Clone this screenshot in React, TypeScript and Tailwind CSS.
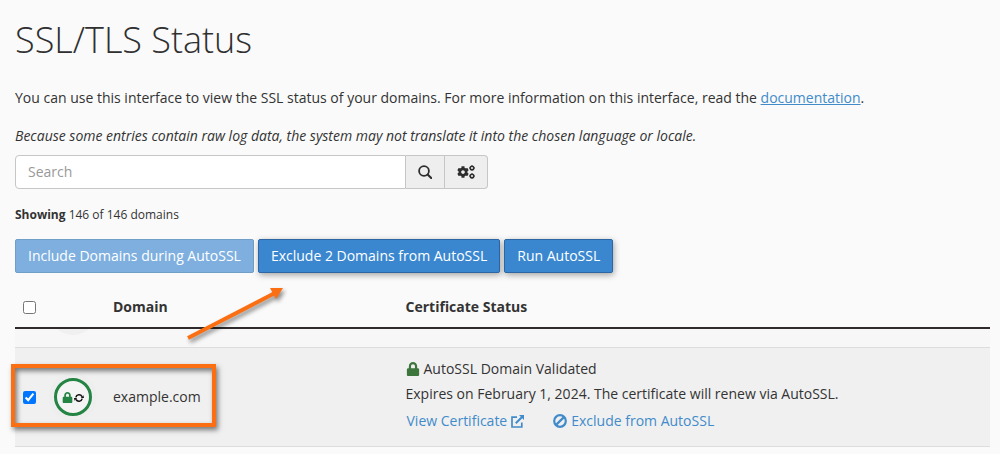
import React, { useState } from "react";
import { FaLock, FaCog } from "react-icons/fa";

const actionButton =
  "h-[34px] px-3 rounded-[2px] border border-[#2c67a3] bg-[#3a87d0] text-white whitespace-nowrap shadow-[1px_2px_6px_rgba(0,0,0,0.35)]";

function SearchIcon() {
  return (
    <svg width="14" height="14" viewBox="0 0 14 14" fill="none" stroke="#2d2d2d" strokeWidth="1.8" aria-hidden="true">
      <circle cx="6" cy="6" r="4.9" />
      <path d="M9.6 9.6 L13.2 13" strokeWidth="2.1" strokeLinecap="round" />
    </svg>
  );
}

function CogsIcon() {
  return (
    <span className="flex items-center">
      <FaCog size={12} />
      <svg width="6" height="14" viewBox="0 0 6 14" fill="none" stroke="#2d2d2d" strokeWidth="1.5" aria-hidden="true">
        <circle cx="3" cy="3" r="1.8" />
        <circle cx="3" cy="11" r="1.8" />
        <path d="M3 0v.8M3 5.2v.8M0 3h.8M5.2 3h.8M3 8v.8M3 13.2v.8M0 11h.8M5.2 11h.8" strokeWidth="1" />
      </svg>
    </span>
  );
}

function SyncIcon() {
  return (
    <svg width="10" height="10" viewBox="0 0 10 10" fill="none" stroke="#111111" strokeWidth="1.5" className="mt-0.5" aria-hidden="true">
      <path d="M1.8 4.3 A3.3 3.3 0 0 1 8 3.6" />
      <path d="M8.2 5.7 A3.3 3.3 0 0 1 2 6.4" />
      <path d="M6.8 4.9 H10 L9.4 2.2 Z" fill="#111111" stroke="none" />
      <path d="M3.2 5.1 H0 L.6 7.8 Z" fill="#111111" stroke="none" />
    </svg>
  );
}

function ExternalLinkIcon() {
  return (
    <svg width="13" height="13" viewBox="0 0 13 13" fill="none" stroke="currentColor" strokeWidth="1.7" aria-hidden="true">
      <path d="M6 2.2 H1 V12 H10.8 V7.5" />
      <path d="M4.8 8.2 L10.8 2.2" strokeWidth="2" />
      <path d="M8 0 H13 V5 Z" fill="currentColor" stroke="none" />
    </svg>
  );
}

function BanIcon() {
  return (
    <svg width="14" height="14" viewBox="0 0 14 14" fill="none" stroke="currentColor" strokeWidth="2.2" aria-hidden="true">
      <circle cx="7" cy="7" r="5.8" />
      <path d="M3.1 10.9 L10.9 3.1" />
    </svg>
  );
}

function StatusBadge() {
  return (
    <span className="flex size-12 items-center justify-center rounded-full bg-[#eeeeee]">
      <span className="flex size-[38px] items-center justify-center gap-px rounded-full border-[3px] border-[#238443] bg-[#f4f4f4]">
        <FaLock size={11} className="text-[#238443]" />
        <SyncIcon />
      </span>
    </span>
  );
}

// Pointer from the selected row up to the exclude button
function Arrow() {
  return (
    <svg
      className="pointer-events-none absolute left-[180px] top-[280px] overflow-visible drop-shadow-[2px_3px_2px_rgba(0,0,0,0.45)]"
      width="110"
      height="65"
      viewBox="0 0 110 65"
      aria-hidden="true"
    >
      <path d="M8 58 L95 13" stroke="#fb6f12" strokeWidth="4" />
      <path d="M103 8 L90 8 L96 19 Z" fill="#fb6f12" />
    </svg>
  );
}

export default function App() {
  const [search, setSearch] = useState("");
  const [allChecked, setAllChecked] = useState(false);
  const [checked, setChecked] = useState(true);

  return (
    <div className="relative min-h-screen bg-[#fafafa] pl-[15px] pr-2.5 pt-5 pb-[7px] font-['Open_Sans',sans-serif] text-sm/5 text-[#333333]">
      <h1 className="text-[36px]/[40px] font-light text-[#2f2f2f]">SSL/TLS Status</h1>
      <p className="mt-7">
        You can use this interface to view the SSL status of your domains. For more information on this interface, read the{" "}
        <a href="#" className="text-[#428bca] underline">documentation</a>.
      </p>
      <p className="mt-[18px] italic">
        Because some entries contain raw log data, the system may not translate it into the chosen language or locale.
      </p>

      <div className="mt-[9px] flex h-[34px] w-full max-w-[473px]">
        <input
          type="text"
          aria-label="Search"
          placeholder="Search"
          value={search}
          onChange={(e) => setSearch(e.target.value)}
          className="min-w-0 flex-1 rounded-l border border-[#c6c6c6] bg-white px-3 outline-none placeholder:text-[#999999]"
        />
        <button type="button" aria-label="Search domains" className="flex w-[39px] items-center justify-center border-y border-r border-[#c6c6c6] bg-[#eeeeee]">
          <SearchIcon />
        </button>
        <button type="button" aria-label="Search options" className="flex w-[43px] items-center justify-center rounded-r border-y border-r border-[#c6c6c6] bg-[#eeeeee] text-[#2d2d2d]">
          <CogsIcon />
        </button>
      </div>

      <p className="mt-4 text-xs/5"><strong className="font-bold">Showing</strong> 146 of 146 domains</p>

      <div className="mt-[14px] flex gap-1">
        <button type="button" disabled className="h-[34px] whitespace-nowrap rounded-[2px] border border-[#6f9fc9] bg-[#7eafdf] px-3 text-white">
          Include Domains during AutoSSL
        </button>
        <button type="button" className={actionButton}>Exclude 2 Domains from AutoSSL</button>
        <button type="button" className={actionButton}>Run AutoSSL</button>
      </div>

      <table className="mt-[14px] w-full table-fixed text-left">
        <colgroup>
          <col className="w-[34px]" />
          <col className="w-16" />
          <col className="w-[30%]" />
          <col />
        </colgroup>
        <thead>
          <tr className="h-[41px] border-b-2 border-[#2f2b2c]">
            <th className="pl-2">
              <input type="checkbox" aria-label="Select all domains" checked={allChecked} onChange={() => setAllChecked(!allChecked)} className="block size-[13px]" />
            </th>
            <th />
            <th className="font-bold">Domain</th>
            <th className="font-bold">Certificate Status</th>
          </tr>
        </thead>
        <tbody>
          <tr className="bg-[#f7f7f7]">
            <td />
            <td className="p-0">
              <div className="h-[18px]">
                <div className="flex h-1.5 items-end overflow-hidden">
                  <span className="block size-12 shrink-0 rounded-full bg-[#f0f0f0]" />
                </div>
              </div>
            </td>
            <td />
            <td />
          </tr>
          <tr className="border-y border-[#dddddd] bg-[#f0f0f0]">
            <td className="relative pl-2">
              <input type="checkbox" aria-label="Select example.com" checked={checked} onChange={() => setChecked(!checked)} className="block size-[13px] accent-[#0075ff]" />
              <div className="pointer-events-none absolute -left-1 top-4 h-[63px] w-[205px] border-4 border-[#fb6f12] shadow-[2px_3px_5px_rgba(0,0,0,0.5),inset_2px_3px_5px_rgba(0,0,0,0.5)]" />
            </td>
            <td><StatusBadge /></td>
            <td className="font-medium">example.com</td>
            <td className="pb-[15px] pt-[11px]">
              <div className="flex h-5 items-center gap-1">
                <FaLock size={14} className="text-[#3c763d]" /> AutoSSL Domain Validated
              </div>
              <div className="mt-[5px]">Expires on February 1, 2024. The certificate will renew via AutoSSL.</div>
              <div className="mt-[7px] flex gap-[29px] pl-px text-[#428bca]">
                <a href="#" className="flex items-center gap-1">View Certificate <ExternalLinkIcon /></a>
                <a href="#" className="flex items-center gap-1"><BanIcon /> Exclude from AutoSSL</a>
              </div>
            </td>
          </tr>
        </tbody>
      </table>
      <Arrow />
    </div>
  );
}
